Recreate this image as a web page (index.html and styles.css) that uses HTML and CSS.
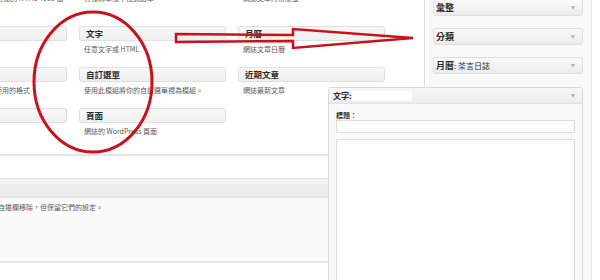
FILE: index.html
```html
<!DOCTYPE html>
<html lang="zh-Hant">
<head>
  <meta charset="UTF-8">
  <meta name="viewport" content="width=device-width, initial-scale=1.0">
  <title>模組</title>
  <link rel="stylesheet" href="styles.css">
</head>
<body>
  <div class="screen">
    <div class="main">
      <div class="available">
        <div class="widget-grid">
          <!-- 上一列只剩說明文字的底部 -->
          <div class="widget tail"><p class="desc">來自任何 RSS 或 Atom 訂閱的 HTML 4000 個</p></div>
          <div class="widget tail"><p class="desc">分類清單或下拉式選單</p></div>
          <div class="widget tail"><p class="desc">網誌文章月份彙整</p></div>

          <div class="widget">
            <div class="widget-top"><span class="widget-title">搜尋</span></div>
            <p class="desc">網誌的搜尋表單</p>
          </div>
          <div class="widget">
            <div class="widget-top"><span class="widget-title">文字</span></div>
            <p class="desc">任意文字或 HTML</p>
          </div>
          <div class="widget">
            <div class="widget-top"><span class="widget-title">月曆</span></div>
            <p class="desc">網誌文章日曆</p>
          </div>

          <div class="widget">
            <div class="widget-top"><span class="widget-title">標籤雲</span></div>
            <p class="desc">以雲端形式顯示你最常使用的格式</p>
          </div>
          <div class="widget">
            <div class="widget-top"><span class="widget-title">自訂選單</span></div>
            <p class="desc">使用此模組將你的自訂選單視為模組。</p>
          </div>
          <div class="widget">
            <div class="widget-top"><span class="widget-title">近期文章</span></div>
            <p class="desc">網誌最新文章</p>
          </div>

          <div class="widget">
            <div class="widget-top"><span class="widget-title">連結</span></div>
            <p class="desc">你的網誌連結</p>
          </div>
          <div class="widget">
            <div class="widget-top"><span class="widget-title">頁面</span></div>
            <p class="desc">網誌的 WordPress 頁面</p>
          </div>
        </div>
      </div>

      <div class="inactive">
        <div class="inactive-head"></div>
        <div class="inactive-body">
          <p class="inactive-text">將模組拖曳至此處，即可自邊欄移除，但保留它們的設定。</p>
        </div>
      </div>
    </div>

    <div class="sidebar">
      <div class="sb-widget"><span class="sb-title"><b>彙整</b></span><span class="toggle"></span></div>
      <div class="sb-widget"><span class="sb-title"><b>分類</b></span><span class="toggle"></span></div>
      <div class="sb-widget"><span class="sb-title"><b>月曆</b>: 茶言日誌</span><span class="toggle"></span></div>
    </div>

    <!-- 拖曳中的文字模組 -->
    <div class="drag-panel">
      <div class="drag-head">
        <span class="drag-title"><b>文字:</b><span class="blank"></span></span>
        <span class="toggle"></span>
      </div>
      <div class="drag-body">
        <label class="field-label" for="wTitle">標題：</label>
        <input class="field" id="wTitle" type="text">
        <textarea class="field area"></textarea>
      </div>
    </div>

    <svg class="marks" width="600" height="280" viewBox="0 0 600 280">
      <ellipse cx="93" cy="82" rx="59" ry="70" fill="none" stroke="#c8131d" stroke-width="3"/>
      <polygon points="176,34 293,35 293,29 413,38 293,48 293,41 176,42" fill="none" stroke="#c8131d" stroke-width="2.5" stroke-linejoin="miter"/>
    </svg>
  </div>
</body>
</html>
```

FILE: styles.css
```css
:root {
  --title: #2b2b2b;
  --desc: #5a5a5a;
}

* {
  box-sizing: border-box;
}

body {
  margin: 0;
  background: #fff;
  font-family: "Noto Sans CJK TC", "Liberation Sans", sans-serif;
  color: var(--title);
}

.screen {
  position: relative;
  display: flex;
  width: 600px;
  height: 280px;
  overflow: hidden;
}

.main {
  flex: 0 0 425px;
}

.available {
  border-right: 1px solid #e2e2e2;
  border-bottom: 2px solid #e6e6e6;
  padding-bottom: 18px;
}

.widget-grid {
  display: grid;
  grid-template-columns: repeat(3, 147px);
  column-gap: 12px;
  row-gap: 13px;
  margin-left: -80px;
  margin-top: -7px;
}

.widget.tail {
  padding-bottom: 10px;
}

.widget-top {
  height: 15px;
  border: 1px solid #dfdfdf;
  border-radius: 3px;
  background: linear-gradient(#f8f8f8, #efefef);
  padding: 0 6px;
  font-size: 8.5px;
  line-height: 13px;
}

.widget-title {
  font-weight: bold;
  white-space: nowrap;
}

.desc {
  margin: 3px 0 0;
  padding: 0 5px;
  font-size: 7px;
  line-height: 10px;
  color: var(--desc);
  white-space: nowrap;
}

.tail .desc {
  margin-top: 0;
}

.inactive {
  margin-top: 22px;
}

.inactive-head {
  height: 20px;
  border-top: 1px solid #dedede;
  border-bottom: 1px solid #e2e2e2;
  background: linear-gradient(#f4f4f4, #eaeaea);
}

.inactive-body {
  height: 65px;
  padding-top: 4px;
  background: #fbfbfb;
  border-bottom: 2px solid #e6e6e6;
}

.inactive-text {
  margin: 0 0 0 -79px;
  font-size: 7px;
  line-height: 10px;
  color: var(--desc);
  white-space: nowrap;
}

.sidebar {
  flex: 0 0 163px;
  margin-left: 4px;
  padding: 0 8px 0 3px;
  background: #f9f9f9;
  border-left: 1px solid #f0f0f0;
  border-right: 1px solid #e4e4e4;
  display: flex;
  flex-direction: column;
  gap: 12px;
}

.sb-widget {
  display: flex;
  align-items: center;
  justify-content: space-between;
  height: 17px;
  padding: 0 7px 0 2px;
  border: 1px solid #dedede;
  border-radius: 3px;
  background: linear-gradient(#fafafa, #ececec);
  font-size: 8px;
  line-height: 10px;
}

.sb-widget:first-child {
  margin-top: -1px;
}

.sb-title b {
  font-size: 9px;
}

.toggle {
  width: 0;
  height: 0;
  border-left: 2.5px solid transparent;
  border-right: 2.5px solid transparent;
  border-top: 4px solid #b5b5b5;
}

.drag-panel {
  position: absolute;
  left: 328px;
  top: 87px;
  width: 255px;
  height: 220px;
  border: 1px solid #d8d8d8;
  border-radius: 3px 3px 0 0;
  background: #f9f9f9;
}

.drag-head {
  display: flex;
  align-items: center;
  justify-content: space-between;
  height: 16px;
  padding: 0 7px 0 4px;
  border-bottom: 1px solid #e2e2e2;
  background: linear-gradient(#f7f7f7, #ececec);
  font-size: 8px;
  line-height: 10px;
}

.drag-title {
  display: flex;
  align-items: center;
}

.blank {
  display: inline-block;
  width: 60px;
  height: 10px;
  background: #fff;
}

.drag-body {
  padding: 0 7px;
}

.field-label {
  display: block;
  margin-top: 6px;
  font-size: 7px;
  line-height: 10px;
  font-weight: bold;
}

.field {
  display: block;
  width: 100%;
  height: 13px;
  margin: 0;
  padding: 0;
  border: 1px solid #dcdcdc;
  background: #fff;
  outline: none;
}

.area {
  height: 180px;
  margin-top: 6px;
  resize: none;
}

.marks {
  position: absolute;
  left: 0;
  top: 0;
  pointer-events: none;
}
```
